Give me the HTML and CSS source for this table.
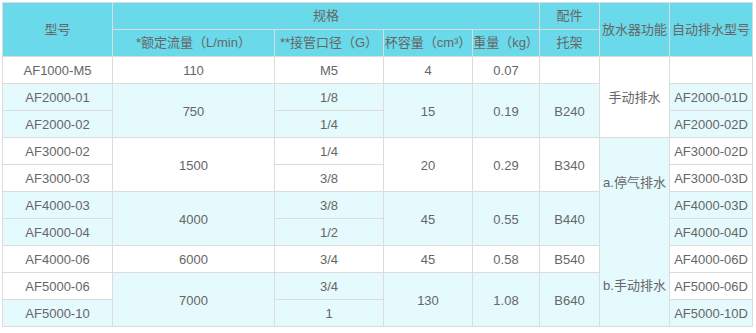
FILE: index.html
```html
<!DOCTYPE html>
<html lang="zh">
<head>
<meta charset="utf-8">
<link rel="stylesheet" href="styles.css">
</head>
<body>
<table class="spec">
  <colgroup>
    <col class="c1"><col class="c2"><col class="c3"><col class="c4"><col class="c5"><col class="c6"><col class="c7"><col class="c8">
  </colgroup>
  <thead>
    <tr>
      <th rowspan="2">型号</th>
      <th colspan="4">规格</th>
      <th>配件</th>
      <th rowspan="2">放水器功能</th>
      <th rowspan="2">自动排水型号</th>
    </tr>
    <tr>
      <th>*额定流量（L/min）</th>
      <th>**接管口径（G）</th>
      <th>杯容量（cm³）</th>
      <th>重量（kg）</th>
      <th>托架</th>
    </tr>
  </thead>
  <tbody>
    <tr>
      <td>AF1000-M5</td><td>110</td><td>M5</td><td>4</td><td>0.07</td><td></td>
      <td rowspan="3">手动排水</td><td></td>
    </tr>
    <tr class="alt">
      <td>AF2000-01</td><td rowspan="2">750</td><td>1/8</td><td rowspan="2">15</td><td rowspan="2">0.19</td><td rowspan="2">B240</td>
      <td>AF2000-01D</td>
    </tr>
    <tr class="alt">
      <td>AF2000-02</td><td>1/4</td><td>AF2000-02D</td>
    </tr>
    <tr>
      <td>AF3000-02</td><td rowspan="2">1500</td><td>1/4</td><td rowspan="2">20</td><td rowspan="2">0.29</td><td rowspan="2">B340</td>
      <td rowspan="7" class="func"><div class="func-a">a.停气排水</div><div class="func-b">b.手动排水</div></td>
      <td>AF3000-02D</td>
    </tr>
    <tr>
      <td>AF3000-03</td><td>3/8</td><td>AF3000-03D</td>
    </tr>
    <tr class="alt">
      <td>AF4000-03</td><td rowspan="2">4000</td><td>3/8</td><td rowspan="2">45</td><td rowspan="2">0.55</td><td rowspan="2">B440</td>
      <td>AF4000-03D</td>
    </tr>
    <tr class="alt">
      <td>AF4000-04</td><td>1/2</td><td>AF4000-04D</td>
    </tr>
    <tr>
      <td>AF4000-06</td><td>6000</td><td>3/4</td><td>45</td><td>0.58</td><td>B540</td><td>AF4000-06D</td>
    </tr>
    <tr>
      <td>AF5000-06</td><td rowspan="2" class="blue">7000</td><td class="blue">3/4</td><td rowspan="2" class="blue">130</td><td rowspan="2" class="blue">1.08</td><td rowspan="2" class="blue">B640</td>
      <td>AF5000-06D</td>
    </tr>
    <tr class="alt">
      <td>AF5000-10</td><td>1</td><td>AF5000-10D</td>
    </tr>
  </tbody>
</table>
</body>
</html>
```

FILE: styles.css
```css
html, body {
  margin: 0;
  padding: 0;
  background: #ffffff;
}

body {
  padding: 2px;
  font-family: "Liberation Sans", Arial, "Noto Sans CJK SC", sans-serif;
  font-size: 13px;
  color: #666666;
}

.spec {
  border-collapse: collapse;
  table-layout: fixed;
  width: 750px;
}

.c1 { width: 110px; }
.c2 { width: 162px; }
.c3 { width: 109px; }
.c4 { width: 89px; }
.c5 { width: 67px; }
.c6 { width: 60px; }
.c7 { width: 70px; }
.c8 { width: 83px; }

.spec th,
.spec td {
  border: 1px solid #dcdcdc;
  padding: 0;
  text-align: center;
  vertical-align: middle;
  white-space: nowrap;
  line-height: 18px;
}

.spec tr {
  height: 27px;
}

.spec th {
  background: #6ad9e9;
  font-weight: normal;
  color: #666666;
}

.spec td {
  background: #ffffff;
  padding-top: 2px;
}

.spec tr.alt td,
.spec td.blue,
.spec td.func {
  background: #e4fafd;
}

.spec td.func {
  vertical-align: top;
  padding-top: 36px;
}

.func-b {
  margin-top: 85px;
}
```
